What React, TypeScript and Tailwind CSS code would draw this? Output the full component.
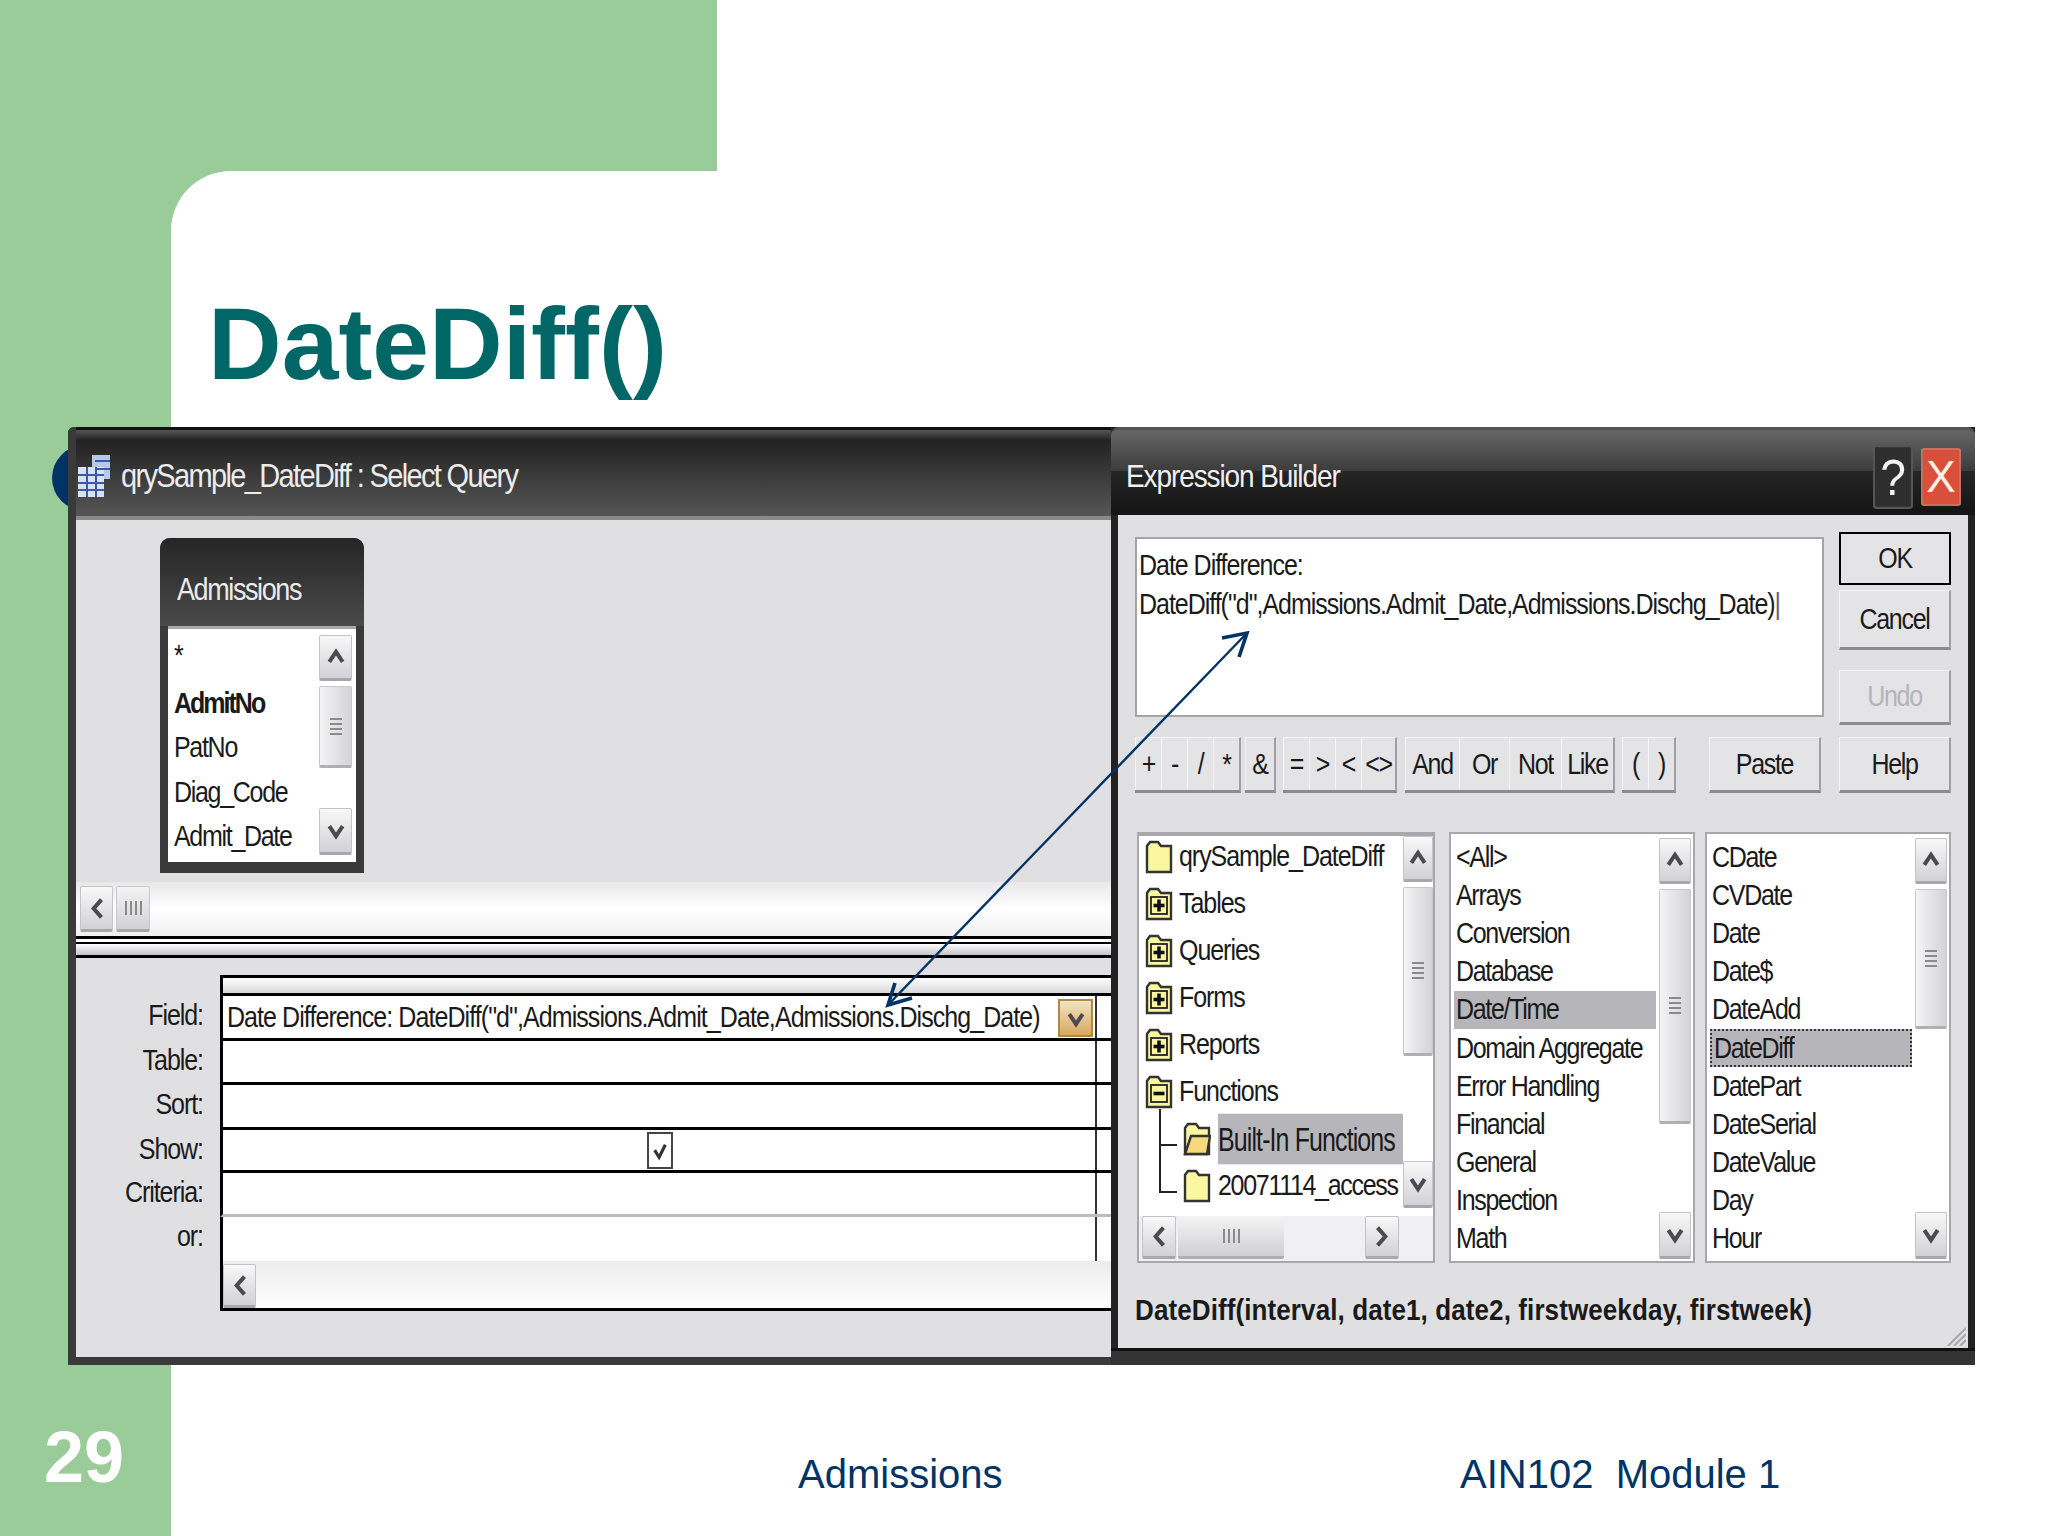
import type { ReactNode } from "react";

const ui = "font-['Liberation_Sans',Arial,sans-serif] text-[25px] leading-none tracking-[-1.3px] text-[#1a1a1a] whitespace-nowrap scale-y-[1.15]";
const barText = "font-['Liberation_Sans',Arial,sans-serif] leading-none text-[#ececec] whitespace-nowrap scale-y-[1.15]";

function Chevron({ dir, className = "w-[20px] h-[25px]" }: { dir: "up" | "down" | "left" | "right"; className?: string }) {
  const d = {
    up: "M3 15 L9 6 L15 15",
    down: "M3 7 L9 16 L15 7",
    left: "M13 3 L6 11 L13 19",
    right: "M5 3 L12 11 L5 19",
  }[dir];
  return (
    <svg viewBox="0 0 18 22" className={className} fill="none" stroke="#4a4a50" strokeWidth="3.6">
      <path d={d} />
    </svg>
  );
}

function Grip({ vertical = false }: { vertical?: boolean }) {
  return (
    <div className={vertical ? "flex flex-col gap-[3px]" : "flex gap-[3px]"}>
      {[0, 1, 2, 3].map((i) => (
        <span key={i} className={vertical ? "block w-[12px] h-[2px] bg-[#8a8a8a]" : "block w-[2px] h-[14px] bg-[#8a8a8a]"} />
      ))}
    </div>
  );
}

function ScrollBtn({ dir, className = "" }: { dir: "up" | "down" | "left" | "right"; className?: string }) {
  return (
    <div className={`flex items-center justify-center rounded-[2px] border border-[#c4c4c8] border-b-[3px] border-b-[#a8a8ac] bg-linear-to-b from-[#f8f8f8] to-[#d2d2d6] ${className}`}>
      <Chevron dir={dir} />
    </div>
  );
}

function VScroll({ thumb, className = "" }: { thumb: number; className?: string }) {
  return (
    <div className={`flex flex-col shrink-0 ${className}`}>
      <ScrollBtn dir="up" className="h-[46px] shrink-0" />
      <div
        className="mt-[5px] flex items-center justify-center shrink-0 rounded-[2px] border border-[#c8c8cc] border-b-[3px] border-b-[#b0b0b4] bg-linear-to-r from-[#f4f4f4] to-[#d4d4d8]"
        style={{ height: thumb }}
      >
        <Grip vertical />
      </div>
      <div className="flex-1" />
      <ScrollBtn dir="down" className="h-[47px] shrink-0" />
    </div>
  );
}

function Button({ label, className = "", muted = false }: { label: string; className?: string; muted?: boolean }) {
  return (
    <div className={`flex items-center justify-center border-t border-l border-[#f4f4f4] border-r-2 border-b-[3px] border-r-[#a0a0a4] border-b-[#8c8c90] bg-[#e4e4e6] ${className}`}>
      <span className={muted ? `${ui} !text-[#b4b4b8]` : ui}>{label}</span>
    </div>
  );
}

function OpGroup({ items, widths, className = "" }: { items: string[]; widths: number[]; className?: string }) {
  return (
    <div className={`flex h-full border-t border-[#f4f4f4] border-r-2 border-b-[3px] border-r-[#a0a0a4] border-b-[#8c8c90] bg-[#e4e4e6] ${className}`}>
      {items.map((op, i) => (
        <div key={op} className="flex items-center justify-center border-l border-[#f4f4f4]" style={{ width: widths[i] }}>
          <span className={ui}>{op}</span>
        </div>
      ))}
    </div>
  );
}

function Folder({ mark, open = false }: { mark?: "plus" | "minus"; open?: boolean }) {
  return (
    <svg viewBox="0 0 28 34" className="w-[28px] h-[34px] shrink-0">
      <path d="M2 32 V6 L5 2 H13 L16 6 H26 V32 Z" fill="#fbf7a0" stroke="#333" strokeWidth="2.4" />
      {open && <path d="M2 32 L8 14 H27 L24 32 Z" fill="#f6d97a" stroke="#333" strokeWidth="2.4" />}
      {mark && <rect x="6" y="10" width="16" height="17" fill="#fbf7a0" stroke="#222" strokeWidth="1.8" />}
      {mark && <path d="M8.5 18.5 H19.5" stroke="#111" strokeWidth="3.6" />}
      {mark === "plus" && <path d="M14 12.5 V24.5" stroke="#111" strokeWidth="3.6" />}
    </svg>
  );
}

function TreeRow({ label, mark }: { label: string; mark?: "plus" | "minus" }) {
  return (
    <div className="flex items-center h-[47px] pl-[6px] gap-[6px]">
      <Folder mark={mark} />
      <span className={`${ui} !tracking-[-1.05px]`}>{label}</span>
    </div>
  );
}

function FuncList({ items, selected, dotted, thumb, className }: { items: string[]; selected: string; dotted?: boolean; thumb: number; className: string }) {
  return (
    <div className={`flex h-[431px] bg-white border-2 border-[#a8a8ac] pt-[4px] pb-[2px] ${className}`}>
      <div className="flex-1 pl-[3px] pr-[3px]">
        {items.map((item) => (
          <div
            key={item}
            className={`flex items-center h-[38.2px] pl-[2px] ${item === selected ? "bg-[#b6b6ba]" : ""} ${item === selected && dotted ? "border-2 border-dotted border-[#333]" : ""}`}
          >
            <span className={ui}>{item}</span>
          </div>
        ))}
      </div>
      <VScroll thumb={thumb} className="w-[32px] mr-[2px]" />
    </div>
  );
}

function QueryRow({ label, children, line = "border-black", h }: { label: string; children?: ReactNode; line?: string; h: string }) {
  return (
    <div className={`flex ${h}`}>
      <div className={`w-[127px] mr-[17px] pt-[7px] text-right ${ui} !tracking-[-1.05px]`}>{label}</div>
      <div className={`flex-1 flex border-l-[3px] border-black border-b-[3px] ${line} bg-white`}>
        <div className="flex-1 flex items-center border-r-2 border-[#333] relative">{children}</div>
        <div className="w-[14px]" />
      </div>
    </div>
  );
}

export default function App() {
  return (
    <div className="flex w-[2048px] h-[1536px] overflow-hidden bg-white font-['Liberation_Sans',Arial,sans-serif]">
      {/* green rail */}
      <div className="relative w-[171px] shrink-0 bg-[#99cc99] flex flex-col justify-end pl-[44px] pb-[43px]">
        <div className="absolute left-[52px] top-[445px] w-[66px] h-[66px] rounded-full bg-[#003366]" />
        <div className="text-[72px] leading-none font-bold text-white">29</div>
      </div>

      <div className="flex-1 flex flex-col min-w-0">
        <div className="h-[171px] shrink-0 flex">
          <div className="w-[546px] bg-[#99cc99]" />
        </div>
        <div className="flex-1 relative">
          <div className="absolute inset-0 w-[60px] h-[60px] bg-[#99cc99]" />
          <div className="relative h-full bg-white rounded-tl-[60px] pt-[122px] flex flex-col">
            <h1 className="ml-[37px] text-[102px] leading-none font-bold text-[#006666]">DateDiff()</h1>

            {/* screenshot */}
            <div className="relative z-10 -ml-[103px] mt-[32px] w-[1907px] h-[938px] flex shrink-0 bg-[#222] rounded-tl-[6px] overflow-hidden">
              {/* query window */}
              <div className="w-[1043px] shrink-0 flex flex-col border-l-[8px] border-[#3a3a3a]">
                <div className="h-[93px] shrink-0 flex items-center pl-[2px] pt-[6px] gap-[11px] border-t-[3px] border-[#111] border-b-[4px] border-b-[#8a8a8a] bg-[linear-gradient(#555_0%,#222_12%,#565656_100%)]">
                  <svg viewBox="0 0 32 42" className="w-[32px] h-[42px] shrink-0">
                    <rect x="14" y="0" width="18" height="24" fill="#b8c8e8" />
                    <rect x="0" y="12" width="26" height="30" fill="#d8e0f4" />
                    <path d="M0 20 H26 M0 28 H26 M0 35 H26 M9 12 V42 M18 12 V42 M17 6 H32 M17 14 H32" stroke="#3a5aa8" strokeWidth="2" />
                  </svg>
                  <span className={`${barText} text-[29px] tracking-[-1.65px]`}>qrySample_DateDiff : Select Query</span>
                </div>

                <div className="h-[416px] shrink-0 flex flex-col bg-[#e0e0e2]">
                  <div className="h-[362px] shrink-0 pl-[84px] pt-[18px]">
                    <div className="w-[204px] h-[335px] bg-[#3a3a3a] rounded-t-[10px] flex flex-col">
                      <div className="h-[88px] shrink-0 flex items-center pl-[17px] pt-[17px] rounded-t-[10px] bg-linear-to-b from-[#262626] to-[#4a4a4a]">
                        <span className={`${barText} text-[27px] tracking-[-1.4px]`}>Admissions</span>
                      </div>
                      <div className="mx-[8px] h-[236px] flex bg-white border-t-[3px] border-[#a8a8ac]">
                        <div className="flex-1 pl-[6px]">
                          <div className={`h-[52px] flex items-center ${ui}`}>*</div>
                          {["AdmitNo", "PatNo", "Diag_Code", "Admit_Date"].map((f) => (
                            <div key={f} className={`h-[44.4px] flex items-center ${ui} ${f === "AdmitNo" ? "font-bold !tracking-[-2px]" : ""}`}>
                              {f}
                            </div>
                          ))}
                        </div>
                        <VScroll thumb={82} className="w-[33px] mr-[4px] pt-[6px] pb-[7px]" />
                      </div>
                    </div>
                  </div>
                  <div className="flex-1 flex items-stretch pl-[4px] pt-[4px] pb-[4px] gap-[3px] bg-linear-to-b from-[#e8e8ea] via-white to-[#f0f0f0]">
                    <ScrollBtn dir="left" className="w-[33px]" />
                    <div className="w-[34px] flex items-center justify-center rounded-[2px] border border-[#c8c8cc] border-b-[3px] border-b-[#a8a8ac] bg-linear-to-b from-[#f4f4f4] to-[#d2d2d6]">
                      <Grip />
                    </div>
                  </div>
                </div>

                {/* splitter */}
                <div className="h-[22px] shrink-0 flex flex-col border-y-[3px] border-black bg-[#e6e6e8]">
                  <div className="h-[3px] bg-white" />
                  <div className="h-[2px] bg-black" />
                  <div className="flex-1 bg-linear-to-b from-white to-[#c4c4c8]" />
                </div>

                {/* design grid */}
                <div className="flex-1 bg-[#e0e0e2] pt-[17px] border-b-[8px] border-[#3a3a3a]">
                  <div className="flex">
                    <div className="w-[144px]" />
                    <div className="flex-1 h-[21px] border-l-[3px] border-t-[3px] border-b-[3px] border-black bg-linear-to-b from-white to-[#d8d8da]" />
                  </div>
                  <QueryRow label="Field:" h="h-[45px]">
                    <span className={`pl-[4px] ${ui} !tracking-[-0.93px]`}>Date Difference: DateDiff("d",Admissions.Admit_Date,Admissions.Dischg_Date)</span>
                    <div className="absolute right-[2px] top-[3px] w-[35px] h-[38px] flex items-center justify-center border-2 border-[#b08840] bg-linear-to-b from-[#f2e4c0] to-[#d8a860]">
                      <Chevron dir="down" />
                    </div>
                  </QueryRow>
                  <QueryRow label="Table:" h="h-[44px]" />
                  <QueryRow label="Sort:" h="h-[45px]" />
                  <QueryRow label="Show:" h="h-[43px]">
                    <div className="absolute left-[424px] top-[2px] w-[26px] h-[37px] flex items-center justify-center border-2 border-[#444] bg-white">
                      <svg viewBox="0 0 18 22" className="w-[16px] h-[20px]" fill="none" stroke="#333" strokeWidth="3.5">
                        <path d="M3 10 L8 18 L15 4" />
                      </svg>
                    </div>
                  </QueryRow>
                  <QueryRow label="Criteria:" h="h-[44px]" line="!border-b-[#bcbcc0]" />
                  <div className="flex h-[44px]">
                    <div className={`w-[127px] mr-[17px] pt-[7px] text-right ${ui} !tracking-[-1.05px]`}>or:</div>
                    <div className="flex-1 flex border-l-[3px] border-black bg-white">
                      <div className="flex-1 border-r-2 border-[#333]" />
                      <div className="w-[14px]" />
                    </div>
                  </div>
                  <div className="flex h-[50px]">
                    <div className="w-[144px]" />
                    <div className="flex-1 flex border-l-[3px] border-b-[3px] border-black bg-linear-to-b from-[#ececee] to-white pt-[3px]">
                      <ScrollBtn dir="left" className="w-[33px]" />
                    </div>
                  </div>
                </div>
              </div>

              {/* expression builder */}
              <div className="w-[864px] shrink-0 flex flex-col">
                <div className="h-[88px] shrink-0 relative flex items-center pl-[15px] pt-[8px] rounded-t-[8px] border-t-[3px] border-[#555] bg-[linear-gradient(#666_0%,#3c3c3c_48%,#262626_48%,#141414_100%)]">
                  <span className={`${barText} text-[28px] tracking-[-1.1px] !text-[#f0f0f0]`}>Expression Builder</span>
                  <div className="ml-auto mr-[14px] flex gap-[8px]">
                    <div className="w-[40px] h-[58px] flex items-center justify-center rounded-[3px] border-2 border-[#555] bg-[#2e2e2e] text-[46px] leading-none text-[#f2f2f2] scale-y-110">?</div>
                    <div className="w-[40px] h-[58px] flex items-center justify-center rounded-[3px] border-2 border-[#c87060] bg-[#d8503c] text-[44px] leading-none text-[#fff0e0]">X</div>
                  </div>
                </div>
                <div className="relative flex-1 flex flex-col mx-[7px] bg-[#e0e0e2] pl-[17px] pt-[17px]">
                  <div className="flex h-[261px] shrink-0">
                    <div className="w-[689px] flex flex-col pt-[5px]">
                      <div className="h-[180px] shrink-0 bg-white border-2 border-[#a4a4a8] pl-[2px] pt-[14px]">
                        <div className={`${ui} !tracking-[-1.03px]`}>Date Difference:</div>
                        <div className={`${ui} mt-[14px] !tracking-[-1.03px]`}>DateDiff("d",Admissions.Admit_Date,Admissions.Dischg_Date)<span className="text-[#666]">|</span></div>
                      </div>
                      <div className="mt-[20px] h-[56px] flex">
                        <OpGroup items={["+", "-", "/", "*"]} widths={[26, 26, 26, 26]} />
                        <OpGroup items={["&"]} widths={[29]} className="ml-[4px]" />
                        <OpGroup items={["=", ">", "<", "<>"]} widths={[26, 26, 26, 34]} className="ml-[7px]" />
                        <OpGroup items={["And", "Or", "Not", "Like"]} widths={[54, 50, 52, 52]} className="ml-[8px]" />
                        <OpGroup items={["(", ")"]} widths={[26, 26]} className="ml-[7px]" />
                        <Button label="Paste" className="ml-[33px] w-[112px]" />
                      </div>
                    </div>
                    <div className="ml-[15px] w-[112px] flex flex-col">
                      <Button label="OK" className="h-[53px] !border-2 !border-black" />
                      <Button label="Cancel" className="mt-[5px] h-[60px]" />
                      <Button label="Undo" muted className="mt-[20px] h-[55px]" />
                      <Button label="Help" className="mt-[12px] h-[56px]" />
                    </div>
                  </div>

                  <div className="mt-[39px] flex items-start">
                    {/* tree */}
                    <div className="ml-[2px] w-[298px] h-[431px] flex flex-col border-2 border-t-[4px] border-[#a8a8ac] bg-white">
                      <div className="h-[380px] flex shrink-0">
                        <div className="flex-1 relative min-w-0 overflow-hidden">
                          <div className="-mt-[3px]">
                            <TreeRow label="qrySample_DateDiff" />
                            <TreeRow label="Tables" mark="plus" />
                            <TreeRow label="Queries" mark="plus" />
                            <TreeRow label="Forms" mark="plus" />
                            <TreeRow label="Reports" mark="plus" />
                            <TreeRow label="Functions" mark="minus" />
                            <div className="flex items-center h-[47px] pl-[44px] gap-[7px]">
                              <Folder open />
                              <span className={`${ui} !tracking-[-0.9px] scale-y-100 bg-[#b6b6ba] h-[44px] flex items-center w-full`}>
                                <span className="scale-y-[1.15]">Built-In Functions</span>
                              </span>
                            </div>
                            <div className="flex items-center h-[47px] pl-[44px] gap-[7px]">
                              <Folder />
                              <span className={ui}>20071114_access</span>
                            </div>
                          </div>
                          <div className="absolute left-[20px] top-[273px] h-[84px] w-[2px] bg-[#222]" />
                          <div className="absolute left-[20px] top-[308px] h-[2px] w-[18px] bg-[#222]" />
                          <div className="absolute left-[20px] top-[355px] h-[2px] w-[18px] bg-[#222]" />
                        </div>
                        <VScroll thumb={169} className="w-[30px] h-[372px]" />
                      </div>
                      <div className="flex-1 flex items-stretch pl-[3px] pr-[34px] pb-[2px] gap-[2px] bg-[#f0f0f2]">
                        <ScrollBtn dir="left" className="w-[34px]" />
                        <div className="w-[106px] flex items-center justify-center rounded-[2px] border-b-[3px] border-[#b0b0b4] bg-linear-to-b from-[#f4f4f4] to-[#d0d0d4]">
                          <Grip />
                        </div>
                        <div className="flex-1" />
                        <ScrollBtn dir="right" className="w-[34px]" />
                      </div>
                    </div>

                    <FuncList
                      className="ml-[14px] w-[246px]"
                      selected="Date/Time"
                      thumb={235}
                      items={["<All>", "Arrays", "Conversion", "Database", "Date/Time", "Domain Aggregate", "Error Handling", "Financial", "General", "Inspection", "Math"]}
                    />
                    <FuncList
                      className="ml-[10px] w-[246px]"
                      selected="DateDiff"
                      dotted
                      thumb={140}
                      items={["CDate", "CVDate", "Date", "Date$", "DateAdd", "DateDiff", "DatePart", "DateSerial", "DateValue", "Day", "Hour"]}
                    />
                  </div>

                  <div className="mt-[34px] text-[26px] leading-none font-bold tracking-[0.1px] text-[#1a1a1a] whitespace-nowrap scale-y-[1.15] origin-left">
                    DateDiff(interval, date1, date2, firstweekday, firstweek)
                  </div>

                  <svg viewBox="0 0 20 20" className="absolute right-[2px] bottom-[2px] w-[20px] h-[20px]" stroke="#a8a8ac" strokeWidth="2">
                    <path d="M2 20 L20 2 M8 20 L20 8 M14 20 L20 14" />
                  </svg>
                </div>
                <div className="h-[17px] shrink-0 bg-[#333] border-t-[3px] border-[#111]" />
              </div>

              {/* arrow linking grid field to expression box */}
              <svg viewBox="0 0 1907 938" className="absolute inset-0 w-[1907px] h-[938px] pointer-events-none" fill="none" stroke="#003366">
                <path d="M1179 206 L820 578" strokeWidth="2.4" />
                <path d="M1171 230 L1179 206 L1154 211 M827 556 L820 578 L844 571" strokeWidth="3.6" />
              </svg>
            </div>

            {/* footer */}
            <div className="mt-[89px] ml-[627px] flex text-[40px] leading-none text-[#003366]">
              <span className="w-[662px]">Admissions</span>
              <span className="whitespace-pre">AIN102  Module 1</span>
            </div>
          </div>
        </div>
      </div>
    </div>
  );
}
